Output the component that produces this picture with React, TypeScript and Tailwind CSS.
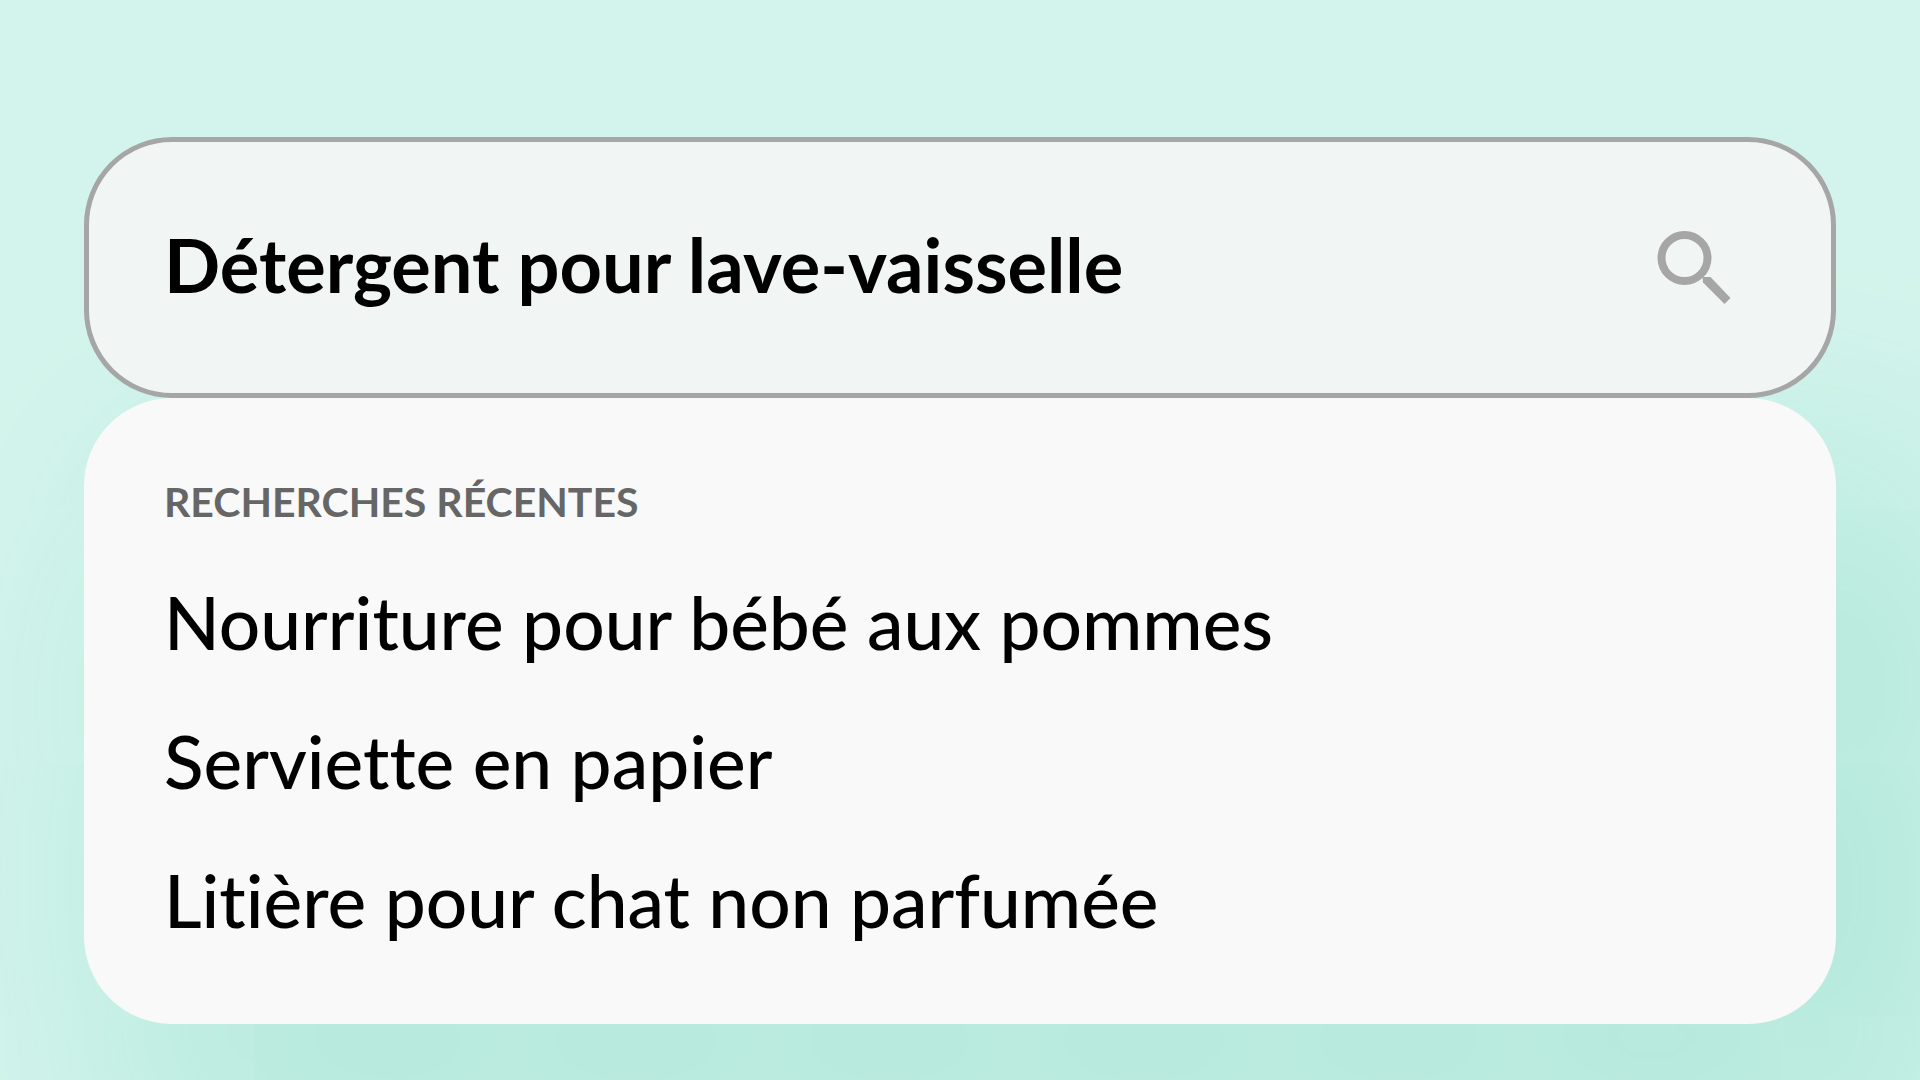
import { useState } from 'react';

const recentSearches = [
  'Nourriture pour bébé aux pommes',
  'Serviette en papier',
  'Litière pour chat non parfumée',
];

function SearchIcon() {
  return (
    <svg viewBox="0 0 74 74" className="size-[74px]" aria-hidden="true">
      <circle cx="27.5" cy="27" r="23" fill="none" stroke="currentColor" strokeWidth="8" />
      <path d="M45.5 46H53.5L73.5 67L67.5 73L46 51.5Z" fill="currentColor" />
    </svg>
  );
}

export default function App() {
  const [query, setQuery] = useState('Détergent pour lave-vaisselle');

  return (
    <main className="min-h-screen overflow-hidden bg-[#d3f4ec] px-[84px] pt-[137px] pb-14 font-[Lato,sans-serif] text-black [font-variant-ligatures:none]">
      <form
        role="search"
        onSubmit={(e) => e.preventDefault()}
        className="relative z-10 flex h-[261px] items-center gap-8 rounded-[88px] border-5 border-[#a6a6a6] bg-[#f1f5f4] pr-[100px] pl-[75px]"
      >
        <input
          type="text"
          aria-label="Rechercher"
          value={query}
          onChange={(e) => setQuery(e.target.value)}
          className="min-w-0 flex-1 bg-transparent pb-1.5 text-[74px] leading-[84px] font-bold outline-none"
        />
        <button type="submit" aria-label="Lancer la recherche" className="shrink-0 text-[#a6a6a6]">
          <SearchIcon />
        </button>
      </form>

      <section
        aria-labelledby="recent-title"
        className="rounded-[88px] bg-[#f9f9f9] px-20 pt-20 pb-[82px] shadow-[85px_110px_220px_50px_#b2e8da]"
      >
        <h2 id="recent-title" className="text-[41px] leading-[48px] font-bold text-[#666666] uppercase">
          Recherches récentes
        </h2>
        <ul className="mt-[55px] flex flex-col gap-14">
          {recentSearches.map((item) => (
            <li key={item}>
              <button
                type="button"
                onClick={() => setQuery(item)}
                className="block text-left text-[73px] leading-[83px] font-medium"
              >
                {item}
              </button>
            </li>
          ))}
        </ul>
      </section>
    </main>
  );
}
